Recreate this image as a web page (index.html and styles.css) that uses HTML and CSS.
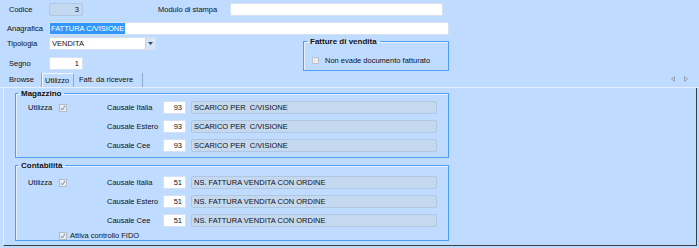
FILE: index.html
```html
<!DOCTYPE html>
<html lang="it">
<head>
    <meta charset="UTF-8">
    <meta name="viewport" content="width=device-width, initial-scale=1.0">
    <title>Causali documento</title>
    <link rel="stylesheet" href="styles.css">
</head>
<body>
<div class="form">
    <div class="row row-codice">
        <span class="lbl lbl-in">Codice</span>
        <span class="fld fld-off num w-code">3</span>
        <span class="lbl lbl-modulo">Modulo di stampa</span>
        <span class="fld w-modulo"></span>
    </div>
    <div class="row row-anag">
        <span class="lbl">Anagrafica</span>
        <span class="fld fld-sel w-anag"><span class="sel">FATTURA C/VISIONE</span></span>
    </div>
    <div class="row-split">
        <div class="left-col">
            <div class="row">
                <span class="lbl">Tipologia</span>
                <span class="fld combo"><span>VENDITA</span><span class="combo-btn"><svg width="5" height="3" viewBox="0 0 5 3"><path d="M0 0H5L2.5 3Z" fill="#2c4a78"/></svg></span></span>
            </div>
            <div class="row row-segno">
                <span class="lbl lbl-in">Segno</span>
                <span class="fld num w-code">1</span>
            </div>
        </div>
        <fieldset class="group g-fatture">
            <legend>Fatture di vendita</legend>
            <div class="chk-row">
                <svg class="chk" width="7" height="7" viewBox="0 0 7 7"><rect x="0.5" y="0.5" width="6" height="6" fill="#e9edf2" stroke="#b9c3ce"/></svg>
                <span>Non evade documento fatturato</span>
            </div>
        </fieldset>
    </div>
</div>

<div class="tabs">
    <span class="tab tab-browse">Browse</span>
    <span class="tab tab-active">Utilizzo</span>
    <span class="tab tab-fatt">Fatt. da ricevere</span>
    <span class="tab-arrows">
        <svg width="4" height="6" viewBox="0 0 4 6"><path d="M3.5 0.5V5.5L0.5 3Z" fill="#c9d3df" stroke="#8a98aa" stroke-width="0.8"/></svg>
        <svg width="4" height="6" viewBox="0 0 4 6"><path d="M0.5 0.5V5.5L3.5 3Z" fill="#c9d3df" stroke="#8a98aa" stroke-width="0.8"/></svg>
    </span>
</div>

<div class="panel">
    <fieldset class="group g-inner g-mag">
        <legend>Magazzino</legend>
        <div class="rows">
            <div class="grow">
                <span class="c-util">Utilizza</span>
                <span class="c-chk"><svg width="8" height="8" viewBox="0 0 8 8"><rect x="0.5" y="0.5" width="7" height="7" fill="#e9edf2" stroke="#b3bdc9"/><path d="M2 4.2L3.4 6L6 1.8" fill="none" stroke="#7d8a9a" stroke-width="1"/></svg></span>
                <span class="c-lbl">Causale Italia</span>
                <span class="fld num w-cau">93</span>
                <span class="fld fld-off w-desc">SCARICO PER  C/VISIONE</span>
            </div>
            <div class="grow">
                <span class="c-util"></span>
                <span class="c-chk"></span>
                <span class="c-lbl">Causale Estero</span>
                <span class="fld num w-cau">93</span>
                <span class="fld fld-off w-desc">SCARICO PER  C/VISIONE</span>
            </div>
            <div class="grow">
                <span class="c-util"></span>
                <span class="c-chk"></span>
                <span class="c-lbl">Causale Cee</span>
                <span class="fld num w-cau">93</span>
                <span class="fld fld-off w-desc">SCARICO PER  C/VISIONE</span>
            </div>
        </div>
    </fieldset>

    <fieldset class="group g-inner g-cont">
        <legend>Contabilità</legend>
        <div class="rows">
            <div class="grow">
                <span class="c-util">Utilizza</span>
                <span class="c-chk"><svg width="8" height="8" viewBox="0 0 8 8"><rect x="0.5" y="0.5" width="7" height="7" fill="#e9edf2" stroke="#b3bdc9"/><path d="M2 4.2L3.4 6L6 1.8" fill="none" stroke="#7d8a9a" stroke-width="1"/></svg></span>
                <span class="c-lbl">Causale Italia</span>
                <span class="fld num w-cau">51</span>
                <span class="fld fld-off w-desc">NS. FATTURA VENDITA CON ORDINE</span>
            </div>
            <div class="grow">
                <span class="c-util"></span>
                <span class="c-chk"></span>
                <span class="c-lbl">Causale Estero</span>
                <span class="fld num w-cau">51</span>
                <span class="fld fld-off w-desc">NS. FATTURA VENDITA CON ORDINE</span>
            </div>
            <div class="grow">
                <span class="c-util"></span>
                <span class="c-chk"></span>
                <span class="c-lbl">Causale Cee</span>
                <span class="fld num w-cau">51</span>
                <span class="fld fld-off w-desc">NS. FATTURA VENDITA CON ORDINE</span>
            </div>
            <div class="grow grow-fido">
                <span class="c-util"></span>
                <svg class="chk" width="8" height="8" viewBox="0 0 8 8"><rect x="0.5" y="0.5" width="7" height="7" fill="#e9edf2" stroke="#b3bdc9"/><path d="M2 4.2L3.4 6L6 1.8" fill="none" stroke="#7d8a9a" stroke-width="1"/></svg>
                <span>Attiva controllo FIDO</span>
            </div>
        </div>
    </fieldset>
</div>
</body>
</html>
```

FILE: styles.css
```css
* {
    box-sizing: border-box;
}
body {
    margin: 0;
    width: 699px;
    height: 248px;
    overflow: hidden;
    font-family: "Liberation Sans", Arial, sans-serif;
    font-size: 7.5px;
    color: #111;
    background: #bfdbff;
}
.form {
    padding-left: 7px;
}
.row {
    display: flex;
    align-items: center;
    height: 13px;
}
.row-codice {
    margin-top: 3px;
}
.row-anag {
    margin-top: 6px;
}
.lbl {
    width: 42px;
    flex: none;
}
.lbl-in {
    padding-left: 2px;
}
.lbl-modulo {
    margin-left: 75px;
    width: 72px;
}
.fld {
    display: flex;
    align-items: center;
    height: 13px;
    flex: none;
    padding: 0 2px;
    background: #fff;
    border: 1px solid #d6e2f1;
    white-space: nowrap;
    overflow: hidden;
}
.fld.num {
    justify-content: flex-end;
    padding-right: 3px;
}
.fld-off {
    background: #c4d8f0;
    border-color: #b1c6e1;
    border-radius: 2px;
}
.w-code {
    width: 34px;
}
.w-modulo {
    width: 213px;
}
.w-anag {
    width: 400px;
}
.fld-sel {
    padding-left: 0;
}
.sel {
    background: #3297fd;
    color: #fff;
    padding: 0 1px;
    line-height: 11px;
}
.row-split {
    display: flex;
    margin-top: 2px;
}
.left-col {
    width: 149px;
}
.row-segno {
    margin-top: 7px;
}
.combo {
    width: 107px;
    padding-right: 0;
    justify-content: space-between;
}
.combo-btn {
    display: flex;
    align-items: center;
    justify-content: center;
    width: 10px;
    height: 11px;
    background: #d8e5f6;
    border-left: 1px solid #c3d4ea;
}

/* group boxes */
.group {
    margin: 0;
    padding: 0;
    border: 1px solid #4f9ef3;
    box-shadow: inset 1px 1px 0 #e4f0ff;
}
.group legend {
    font-weight: bold;
    font-size: 8px;
    line-height: 11px;
    padding: 0 3px;
}
.g-fatture {
    margin: -1px 0 0 147px;
    width: 146px;
    padding: 0 0 5px 8px;
}
.g-fatture legend {
    margin-left: -5px;
}
.chk-row {
    display: flex;
    align-items: center;
    height: 10px;
    margin-top: 8px;
}
.chk {
    flex: none;
    margin-right: 6px;
}
.w-desc {
    white-space: pre;
}

/* tabs */
.tabs {
    display: flex;
    align-items: flex-end;
    height: 17px;
    padding-left: 5px;
    border-bottom: 1px solid #e4eefc;
}
.tab {
    height: 14px;
    line-height: 14px;
    border-right: 1px solid #8ea8c8;
}
.tab-browse {
    width: 37px;
    padding-left: 4px;
}
.tab-active {
    width: 32px;
    padding-left: 2px;
    border-left: 1px solid #f4f9ff;
    border-top: 1px solid #f4f9ff;
    line-height: 13px;
}
.tab-fatt {
    width: 69px;
    padding-left: 5px;
}
.tab-arrows {
    display: flex;
    gap: 9px;
    margin-left: auto;
    margin-right: 11px;
    margin-bottom: 5px;
}

/* tab page */
.panel {
    width: 694px;
    height: 158px;
    margin-left: 3px;
    padding: 0 0 0 11px;
    border-left: 1px solid #e4eefc;
    border-right: 1px solid #3a3f46;
    border-bottom: 1px solid #3a3f46;
}
.g-inner {
    width: 434px;
    padding-left: 12px;
}
.g-inner legend {
    margin-left: -10px;
}
.g-mag {
    padding-top: 2px;
    padding-bottom: 5px;
}
.g-cont {
    margin-top: 2px;
    padding-top: 5px;
}
.rows {
    display: flex;
    flex-direction: column;
    gap: 6px;
}
.grow {
    display: flex;
    align-items: center;
    height: 13px;
}
.c-util {
    width: 31px;
    flex: none;
}
.c-chk {
    display: flex;
    width: 48px;
    flex: none;
}
.c-lbl {
    width: 56px;
    flex: none;
}
.w-cau {
    width: 23px;
}
.w-desc {
    width: 246px;
    margin-left: 5px;
}
.grow-fido {
    height: 9px;
    margin-top: -2px;
}
.grow-fido .chk {
    margin-right: 3px;
}
```
